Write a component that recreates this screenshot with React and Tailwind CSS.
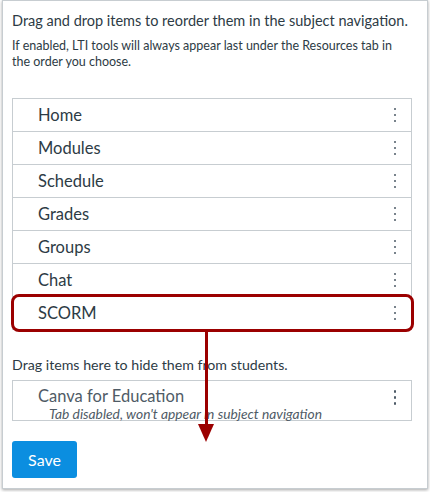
import React from "react";

const items = ["Home", "Modules", "Schedule", "Grades", "Groups", "Chat", "SCORM"];

const Kebab = () => (
  <span className="flex flex-col items-center gap-[3.5px]">
    <span className="w-[2.5px] h-[2.5px] rounded-full bg-[#4d5a66]" />
    <span className="w-[2.5px] h-[2.5px] rounded-full bg-[#4d5a66]" />
    <span className="w-[2.5px] h-[2.5px] rounded-full bg-[#4d5a66]" />
  </span>
);

export default function App() {
  return (
    <div className="bg-white w-[430px] h-[492px] font-['Lato',sans-serif] text-[#2d3b45]">
      <div className="ml-[2px] w-[426px] h-[489px] border border-[#c7cdd1] shadow-[0_1px_3px_rgba(0,0,0,0.35)] pl-[9px] pr-[15px] pt-[11px]">
        <p className="text-[14.5px] leading-[18px] whitespace-nowrap">
          Drag and drop items to reorder them in the subject navigation.
        </p>
        <p className="text-[12.5px] leading-[16px] mt-[8px] pr-[12px]">
          If enabled, LTI tools will always appear last under the Resources tab in the order you choose.
        </p>

        <ul className="mt-[28px] border border-[#c7cdd1] border-b-0">
          {items.map((name) => (
            <li
              key={name}
              className="relative h-[33px] border-b border-[#c7cdd1] flex items-center justify-between pl-[25px] pr-[15px] text-[16.5px]"
            >
              <span>{name}</span>
              <Kebab />
              {name === "SCORM" && (
                <>
                  <span className="absolute -left-[2px] -right-[3px] -top-[3px] -bottom-[3px] border-[3px] border-[#9b0000] rounded-[8px]" />
                  <span className="absolute left-[185px] top-[32px] flex flex-col items-center z-10">
                    <span className="w-[3px] h-[95px] bg-[#9b0000]" />
                    <span className="w-0 h-0 border-l-[8px] border-r-[8px] border-t-[18px] border-l-transparent border-r-transparent border-t-[#9b0000]" />
                  </span>
                </>
              )}
            </li>
          ))}
        </ul>

        <p className="text-[14.2px] leading-[18px] mt-[26px]">Drag items here to hide them from students.</p>

        <div className="mt-[6px] h-[41px] border border-[#c7cdd1] flex items-start justify-between pl-[25px] pr-[15px] pt-[5px]">
          <div className="flex flex-col">
            <span className="text-[16.5px] leading-[20px] text-[#4f5b66]">Canva for Education</span>
            <span className="text-[13.8px] leading-[15px] italic text-[#4f5b66] pl-[11px] whitespace-nowrap">
              Tab disabled, won't appear in subject navigation
            </span>
          </div>
          <span className="pt-[4px]">
            <Kebab />
          </span>
        </div>

        <button className="mt-[20px] w-[65px] h-[37px] rounded-[3px] bg-[#0b8ee0] text-white text-[16px]">
          Save
        </button>
      </div>
    </div>
  );
}
